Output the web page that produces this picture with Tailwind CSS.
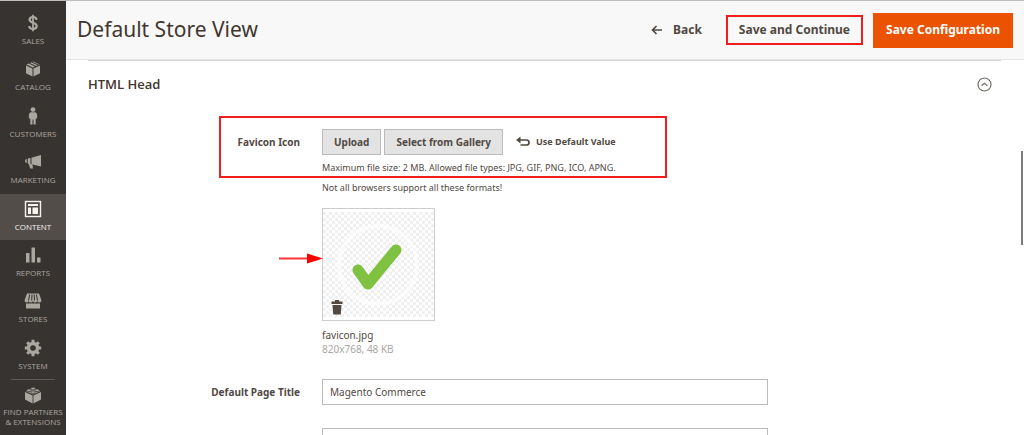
<!DOCTYPE html>
<html lang="en">
<head>
  <meta charset="UTF-8" />
  <meta name="viewport" content="width=device-width, initial-scale=1.0" />
  <title>Default Store View</title>
  <script src="https://cdn.jsdelivr.net/npm/@tailwindcss/browser@4"></script>
</head>
<body class="h-screen overflow-hidden bg-white font-['Noto_Sans',sans-serif] text-[#514943]">

  <div class="relative flex h-screen overflow-hidden border-t border-[#bdbdbd]">

    <!-- Sidebar -->
    <nav class="w-[66px] shrink-0 bg-[#373330] font-['Open_Sans',sans-serif] text-[8px] text-[#aaa6a0]">
      <div class="grid h-[378px] auto-rows-fr pt-[7px] text-center leading-3">
        <a href="#" class="flex flex-col items-center gap-[3px] pt-[6px]">
          <svg class="h-[18px] w-5" viewBox="0 0 20 18" fill="none" stroke="currentColor" stroke-width="2.2"><path d="M13.6 5.800C13.400 3.900 12 3 10 3C7.900 3 6.600 4.100 6.600 5.700C6.600 9.500 13.700 7.900 13.700 12.100C13.700 13.900 12.200 15 10 15C7.700 15 6.400 13.900 6.200 12"/><path d="M10 .8V17.200" stroke-width="1.800"/></svg>
          <span>SALES</span>
        </a>
        <a href="#" class="flex flex-col items-center gap-[3px] pt-[6px]">
          <svg class="h-[18px] w-5" viewBox="0 0 20 18" fill="currentColor"><path d="M3 5.500L9.500 8.500V16.500L3 13.200ZM10.500 8.500L17 5.500V13.200L10.500 16.500Z"/><path d="M3.400 4.500L5.700 3.500L12 6.600L10 7.500ZM6.900 2.900L8.200 2.300L14.700 5.300L13.200 6ZM9.300 1.800L10.300 1.400L16.600 4.400L15.800 4.800Z"/></svg>
          <span>CATALOG</span>
        </a>
        <a href="#" class="flex flex-col items-center gap-[3px] pt-[6px]">
          <svg class="h-[18px] w-5" viewBox="0 0 20 18" fill="currentColor"><circle cx="10" cy="2.600" r="2.400"/><path d="M8 5.200H12Q14 5.400 14.100 7.500V11.500H12.700V17.500H10.500V12.500H9.500V17.500H7.300V11.500H5.900V7.500Q6 5.400 8 5.200Z"/></svg>
          <span>CUSTOMERS</span>
        </a>
        <a href="#" class="flex flex-col items-center gap-[3px] pt-[6px]">
          <svg class="h-[18px] w-5" viewBox="0 0 20 18" fill="currentColor"><path d="M18 2V13.500L8.500 11.200V4.800ZM7.500 5V11L9.500 11.800L10 15.500H7.200L5.600 10.800L4.800 10.500V5.600Z"/><path d="M3.800 6V10Q2 9.800 2 8T3.800 6Z"/></svg>
          <span>MARKETING</span>
        </a>
        <a href="#" class="flex flex-col items-center gap-[3px] bg-[#524d49] pt-[6px] text-[#f7f3eb]">
          <svg class="h-[18px] w-5" viewBox="0 0 20 18" fill="none" stroke="currentColor"><rect x="2.500" y="1.500" width="15" height="15" stroke-width="1.400"/><path d="M5 5H15" stroke-width="2"/><path d="M5 7.500H8V14H5ZM9.500 7.500H15V14H9.500Z" fill="currentColor" stroke="none"/></svg>
          <span>CONTENT</span>
        </a>
        <a href="#" class="flex flex-col items-center gap-[3px] pt-[6px]">
          <svg class="h-[18px] w-5" viewBox="0 0 20 18" fill="currentColor"><rect x="3" y="7" width="3.500" height="9.500" rx=".5"/><rect x="8.500" y="1.500" width="3.500" height="15" rx=".5"/><rect x="14" y="11.500" width="3.500" height="5" rx=".5"/></svg>
          <span>REPORTS</span>
        </a>
        <a href="#" class="flex flex-col items-center gap-[3px] pt-[6px]">
          <svg class="h-[18px] w-5" viewBox="0 0 20 18" fill="currentColor"><path d="M4 1.500H16L18.500 8.500Q18.300 10.500 16.500 10.500T14.300 9Q13.800 10.500 12.200 10.500T10 9Q9.500 10.500 7.800 10.500T5.700 9Q5.200 10.500 3.500 10.500T1.500 8.500Z"/><path d="M3 11.500H17V16.500H3Z"/><path d="M6.700 2.500L5.500 8.500M9 2.500L8.700 8.500M11.200 2.500L11.500 8.500M13.400 2.500L14.600 8.500" stroke="#373330" stroke-width="1"/></svg>
          <span>STORES</span>
        </a>
        <a href="#" class="flex flex-col items-center gap-[3px] pt-[6px]">
          <svg class="h-[18px] w-5" viewBox="0 0 20 18" fill="none" stroke="currentColor"><circle cx="10" cy="9" r="4.500" stroke-width="3.400"/><path d="M10 .8V3.500M10 14.500V17.200M1.800 9H4.500M15.500 9H18.200M4.200 3.200L6.100 5.100M13.900 12.900L15.800 14.800M15.800 3.200L13.900 5.100M6.100 12.900L4.200 14.800" stroke-width="3"/></svg>
          <span>SYSTEM</span>
        </a>
      </div>
      <hr class="mx-[11px] border-[#5f5a56]" />
      <a href="#" class="flex flex-col items-center gap-[3px] pt-[6px] text-center leading-[10px] whitespace-nowrap">
        <svg class="h-[18px] w-5" viewBox="0 0 20 18" fill="currentColor"><path d="M2 6L9.600 9.500V17.500L2 13.500ZM10.400 9.500L18 6V13.500L10.400 17.500Z"/><path d="M2.600 5L10 1.500L17.400 5L10 8.500Z"/><g stroke="#373330" stroke-width=".7"><ellipse cx="10" cy="2.500" rx="2.200" ry="1.300"/><ellipse cx="6" cy="4.300" rx="2.200" ry="1.300"/><ellipse cx="14" cy="4.300" rx="2.200" ry="1.300"/><ellipse cx="10" cy="6.200" rx="2.200" ry="1.300"/></g></svg>
        <span>FIND PARTNERS<br />&amp; EXTENSIONS</span>
      </a>
    </nav>

    <main class="min-w-0 flex-1">

      <!-- Page header -->
      <header class="flex h-[59px] items-center border-b border-[#e6e6e6] bg-[#f8f8f8] px-[11px]">
        <h1 class="flex-1 text-[21px] text-[#41362f]">Default Store View</h1>
        <div class="flex items-center text-[12px] font-bold">
          <button class="mr-6 flex items-center gap-[10px]">
            <svg class="h-3 w-3" viewBox="0 0 12 12" fill="none" stroke="currentColor" stroke-width="1.700"><path d="M11 6H2M5.500 2L1.500 6L5.500 10"/></svg>
            Back
          </button>
          <button class="mr-[10px] h-[30px] border-2 border-[#f21d1d] px-[11px]">Save and Continue</button>
          <button class="h-[35px] bg-[#eb5202] px-[13px] text-white">Save Configuration</button>
        </div>
      </header>

      <!-- HTML head settings -->
      <section class="ml-[22px] mr-[23px] border-t border-[#d6d6d6]">
        <div class="flex h-[47px] items-center justify-between pr-[9px]">
          <h2 class="font-['Open_Sans',sans-serif] text-[13px] font-semibold text-[#41362f]">HTML Head</h2>
          <button aria-label="Collapse HTML Head">
            <svg class="h-[15px] w-[15px]" viewBox="0 0 15 15" fill="none" stroke="#77716c" stroke-width="1.200"><circle cx="7.500" cy="7.500" r="6.500"/><path d="M4.500 8.800L7.500 6.200L10.500 8.800"/></svg>
          </button>
        </div>

        <div class="flex gap-[22px] pt-[21px]">
          <div class="w-[212px] shrink-0 text-right text-[10px] leading-[26px] font-bold">Favicon Icon</div>
          <div class="min-w-0 flex-1 text-[9px] leading-5">
            <div class="flex items-center">
              <button class="mr-[3px] h-[26px] border border-[#bbb] bg-[#e3e3e3] px-[11px] text-[10px] font-bold">Upload</button>
              <button class="mr-[13px] h-[26px] border border-[#bbb] bg-[#e3e3e3] px-[11px] text-[10px] font-bold">Select from Gallery</button>
              <button class="flex items-center gap-[6px] text-[9px] font-bold">
                <svg class="h-3 w-[14px]" viewBox="0 0 14 12" fill="none" stroke="currentColor" stroke-width="1.700"><path d="M3 4H10.500Q13 4 13 6.500T10.500 9H4.500"/><path d="M4.500 .5V7.500L0 4Z" fill="currentColor" stroke="none"/></svg>
                Use Default Value
              </button>
            </div>
            <p class="pt-[3px]">Maximum file size: 2 MB. Allowed file types: JPG, GIF, PNG, ICO, APNG.</p>
            <p>Not all browsers support all these formats!</p>

            <div class="relative mt-[10px] h-[113px] w-[113px] border border-[#ccc] py-[3px]">
              <svg class="h-full w-full" viewBox="0 0 111 105" role="img" aria-label="favicon.jpg">
                <defs>
                  <pattern id="checker" width="6" height="6" patternUnits="userSpaceOnUse"><path d="M0 0H3V3H0ZM3 3H6V6H3Z" fill="#f0f0f0"/></pattern>
                </defs>
                <rect width="111" height="105" fill="url(#checker)"/>
                <circle cx="55" cy="53" r="39" fill="none" stroke="#fff" stroke-opacity=".6" stroke-width="4"/>
                <path d="M35 58L45 72L73 38" fill="none" stroke="#7fc241" stroke-width="11" stroke-linecap="round" stroke-linejoin="round"/>
              </svg>
              <button class="absolute bottom-[5px] left-2" aria-label="Delete image">
                <svg class="h-4 w-3" viewBox="0 0 12 16" fill="#514943"><path d="M4 1H8V2.500H11.500V5H.5V2.500H4ZM1.500 6H10.500L9.800 15.500H2.200Z"/></svg>
              </button>
            </div>
            <p class="pt-[7px] text-[10px] leading-[14px]">favicon.jpg</p>
            <p class="text-[10px] leading-[14px] text-[#a9a6a3]">820x768, 48 KB</p>
          </div>
        </div>

        <div class="flex gap-[22px] pt-[23px]">
          <label for="page-title" class="w-[212px] shrink-0 text-right text-[10px] leading-[26px] font-bold">Default Page Title</label>
          <input id="page-title" type="text" value="Magento Commerce" class="h-[26px] w-full max-w-[446px] border border-[#bbb] px-[7px] text-[10px]" />
        </div>
        <div class="flex gap-[22px] pt-[23px]">
          <div class="w-[212px] shrink-0"></div>
          <input type="text" aria-label="Page title prefix" class="h-[26px] w-full max-w-[446px] border border-[#bbb] px-[7px] text-[10px]" />
        </div>
      </section>
    </main>

    <!-- Callouts -->
    <div class="pointer-events-none absolute top-[115px] left-[219px] h-[62px] w-[448px] border-2 border-[#f21d1d]"></div>
    <svg class="pointer-events-none absolute top-[252px] left-[279px] h-[11px] w-11" viewBox="0 0 44 11"><path d="M0 5.500H30" stroke="#f33" stroke-width="2"/><path d="M28 .5L44 5.500L28 10.500Z" fill="#f00"/></svg>

    <!-- Scroll thumb -->
    <div class="absolute top-[150px] right-px h-[94px] w-[2px] bg-[#7c7c7c]"></div>
  </div>

</body>
</html>
